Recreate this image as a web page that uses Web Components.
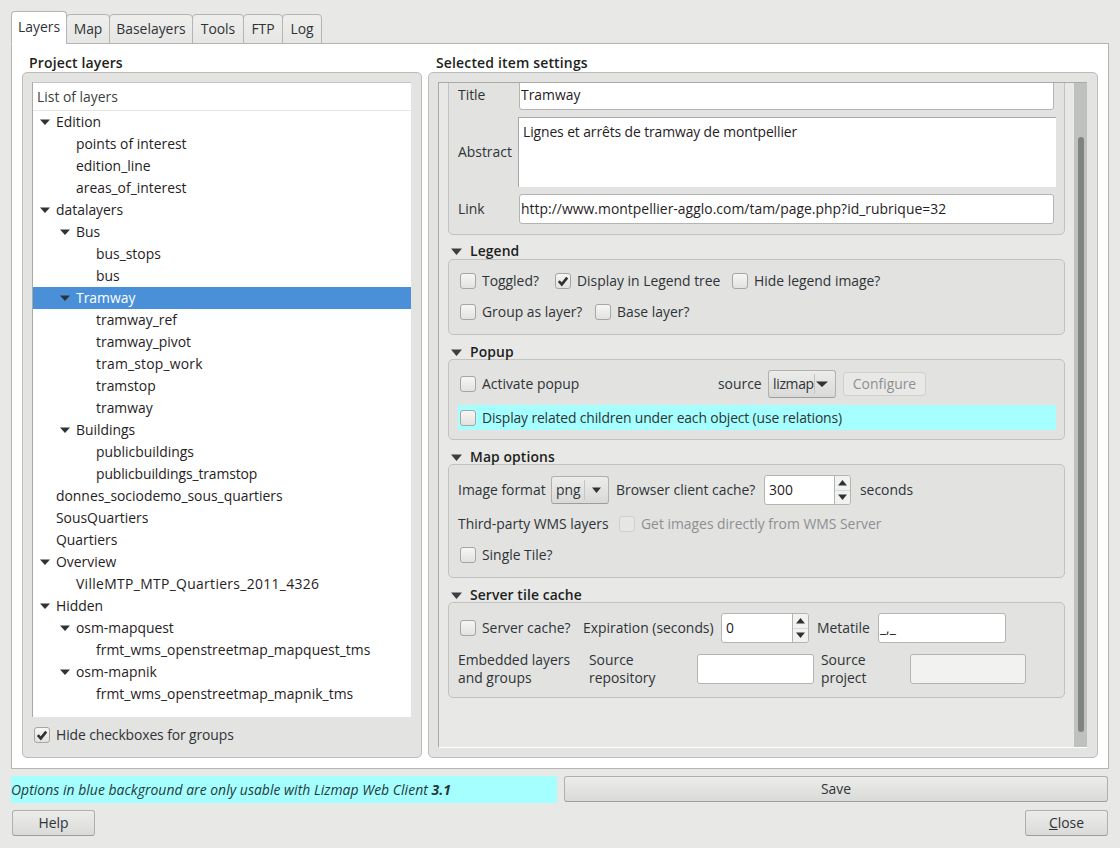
<!DOCTYPE html>
<html>
<head>
<meta charset="utf-8">
<style>
  html, body { margin: 0; background: #e8e8e7; }
  body { font: 13.9px/18px "Open Sans", "Noto Sans", sans-serif; color: #2e3436; width: 1120px; height: 848px; overflow: hidden; }
</style>
</head>
<body>
<lizmap-dialog>
  <tab-bar slot="tabs">
    <tab-button active style="width:56px">Layers</tab-button><tab-button style="width:44px">Map</tab-button><tab-button style="width:84px">Baselayers</tab-button><tab-button style="width:52px">Tools</tab-button><tab-button style="width:40px">FTP</tab-button><tab-button style="width:40px">Log</tab-button>
  </tab-bar>

  <titled-panel slot="left" heading="Project layers" style="width:400px">
    <layer-tree heading="List of layers">
      <tree-row level="0" open>Edition</tree-row>
      <tree-row level="1">points of interest</tree-row>
      <tree-row level="1">edition_line</tree-row>
      <tree-row level="1">areas_of_interest</tree-row>
      <tree-row level="0" open>datalayers</tree-row>
      <tree-row level="1" open>Bus</tree-row>
      <tree-row level="2">bus_stops</tree-row>
      <tree-row level="2">bus</tree-row>
      <tree-row level="1" open selected>Tramway</tree-row>
      <tree-row level="2">tramway_ref</tree-row>
      <tree-row level="2">tramway_pivot</tree-row>
      <tree-row level="2" style="letter-spacing:.2px">tram_stop_work</tree-row>
      <tree-row level="2">tramstop</tree-row>
      <tree-row level="2">tramway</tree-row>
      <tree-row level="1" open>Buildings</tree-row>
      <tree-row level="2">publicbuildings</tree-row>
      <tree-row level="2" style="letter-spacing:-.1px">publicbuildings_tramstop</tree-row>
      <tree-row level="0">donnes_sociodemo_sous_quartiers</tree-row>
      <tree-row level="0">SousQuartiers</tree-row>
      <tree-row level="0">Quartiers</tree-row>
      <tree-row level="0" open>Overview</tree-row>
      <tree-row level="1" style="letter-spacing:.33px">VilleMTP_MTP_Quartiers_2011_4326</tree-row>
      <tree-row level="0" open>Hidden</tree-row>
      <tree-row level="1" open>osm-mapquest</tree-row>
      <tree-row level="2" style="letter-spacing:.05px">frmt_wms_openstreetmap_mapquest_tms</tree-row>
      <tree-row level="1" open>osm-mapnik</tree-row>
      <tree-row level="2" style="letter-spacing:.05px">frmt_wms_openstreetmap_mapnik_tms</tree-row>
    </layer-tree>
    <form-row style="margin:10px 0 0 2px;height:16px"><check-box checked style="letter-spacing:-.1px">Hide checkboxes for groups</check-box></form-row>
  </titled-panel>

  <titled-panel slot="right" heading="Selected item settings" style="width:670px">
    <scroll-area>
      <setting-group style="margin-top:-13px;--pt:9px;--pb:10px">
        <form-row style="height:30px">
          <field-label style="width:61px">Title</field-label>
          <text-input style="width:535px">Tramway</text-input>
        </form-row>
        <form-row style="height:70px;margin-top:7px">
          <field-label style="width:60px">Abstract</field-label>
          <text-area style="width:538px;height:70px;letter-spacing:-.1px">Lignes et arrêts de tramway de montpellier</text-area>
        </form-row>
        <form-row style="height:30px;margin-top:7px">
          <field-label style="width:61px">Link</field-label>
          <text-input style="width:535px;letter-spacing:.03px">http://www.montpellier-agglo.com/tam/page.php?id_rubrique=32</text-input>
        </form-row>
      </setting-group>

      <setting-group heading="Legend" style="margin-top:8px;--pt:10px;--pb:11px">
        <form-row style="height:22px">
          <check-box style="margin-left:2px;width:95px">Toggled?</check-box>
          <check-box checked style="width:177px">Display in Legend tree</check-box>
          <check-box>Hide legend image?</check-box>
        </form-row>
        <form-row style="height:22px;margin-top:9px">
          <check-box style="margin-left:2px;width:135px">Group as layer?</check-box>
          <check-box>Base layer?</check-box>
        </form-row>
      </setting-group>

      <setting-group heading="Popup" style="margin-top:8px;--tp:2px;--pt:10px;--pb:9px">
        <form-row style="height:28px">
          <check-box style="margin-left:2px;width:258px">Activate popup</check-box>
          <field-label style="width:50px">source</field-label>
          <combo-box style="width:68px;letter-spacing:-.3px">lizmap</combo-box>
          <push-button disabled style="width:83px;height:24px;margin-left:7px">Configure</push-button>
        </form-row>
        <form-row style="height:25px;margin-top:7px;background:#a5ffff">
          <check-box style="margin-left:2px;letter-spacing:-.14px">Display related children under each object (use relations)</check-box>
        </form-row>
      </setting-group>

      <setting-group heading="Map options" style="margin-top:8px;--tp:2px;--pt:10px;--pb:11px">
        <form-row style="height:30px">
          <field-label style="width:93px">Image format</field-label>
          <combo-box style="width:58px" separated>png</combo-box>
          <field-label style="width:148px;margin-left:7px">Browser client cache?</field-label>
          <spin-box style="width:87px">300</spin-box>
          <field-label style="margin-left:9px">seconds</field-label>
        </form-row>
        <form-row style="height:22px;margin-top:8px">
          <field-label style="width:161px">Third-party WMS layers</field-label>
          <check-box disabled>Get images directly from WMS Server</check-box>
        </form-row>
        <form-row style="height:22px;margin-top:9px">
          <check-box style="margin-left:2px">Single Tile?</check-box>
        </form-row>
      </setting-group>

      <setting-group heading="Server tile cache" style="margin-top:8px;--tp:2px;--pt:10px;--pb:13px">
        <form-row style="height:30px">
          <check-box style="margin-left:2px;width:123px">Server cache?</check-box>
          <field-label style="width:138px">Expiration (seconds)</field-label>
          <spin-box style="width:88px">0</spin-box>
          <field-label style="width:61px;margin-left:8px">Metatile</field-label>
          <text-input style="width:128px">_,_</text-input>
        </form-row>
        <form-row style="height:30px;margin-top:11px">
          <field-label style="width:131px">Embedded layers<br>and groups</field-label>
          <field-label style="width:108px">Source<br>repository</field-label>
          <text-input style="width:117px"></text-input>
          <field-label style="width:89px;margin-left:7px">Source<br>project</field-label>
          <text-input disabled style="width:116px"></text-input>
        </form-row>
      </setting-group>
    </scroll-area>
  </titled-panel>

  <note-bar slot="note"><i>Options in blue background are only usable with Lizmap Web Client <b>3.1</b></i></note-bar>
  <push-button slot="save" style="width:544px;height:26px">Save</push-button>
  <push-button slot="help" style="width:83px;height:26px">Help</push-button>
  <push-button slot="close" style="width:83px;height:26px"><u>C</u>lose</push-button>
</lizmap-dialog>

<script>
  // one helper, every element sets its own shadow markup
  class Base extends HTMLElement {
    constructor() {
      super();
      this.attachShadow({ mode: "open" });
    }
    connectedCallback() {
      this.shadowRoot.innerHTML = this.markup();
    }
  }

  const arrowDown = (w, h, c) =>
    `<svg width="${w}" height="${h}" viewBox="0 0 10 6" preserveAspectRatio="none"><path d="M0 0.5h10L5 6z" fill="${c}"/></svg>`;
  const arrowUp = (w, h, c) =>
    `<svg width="${w}" height="${h}" viewBox="0 0 10 6" preserveAspectRatio="none"><path d="M0 5.5h10L5 0z" fill="${c}"/></svg>`;

  class LizmapDialog extends Base {
    markup() {
      return `<style>
        :host { display: block; padding: 11px 11px 0 11px; }
        .pane { box-sizing: border-box; width: 1098px; height: 726px; margin-top: -1px; background: #fff;
          border: 1px solid #b4b4b2; padding: 10px; display: flex; gap: 6px; }
        .foot { display: flex; align-items: flex-start; gap: 7px; margin-top: 7px; }
        .btns { display: flex; justify-content: space-between; margin: 7px 1px 0 1px; }
      </style>
      <slot name="tabs"></slot>
      <div class="pane"><slot name="left"></slot><slot name="right"></slot></div>
      <div class="foot"><slot name="note"></slot><slot name="save"></slot></div>
      <div class="btns"><slot name="help"></slot><slot name="close"></slot></div>`;
    }
  }

  class TabBar extends Base {
    markup() {
      return `<style>:host { display: flex; align-items: flex-end; height: 33px; position: relative; z-index: 1; }</style><slot></slot>`;
    }
  }

  class TabButton extends Base {
    markup() {
      const on = this.hasAttribute("active");
      return `<style>
        :host { display: flex; align-items: center; justify-content: center; box-sizing: border-box; margin-right: -1px;
          height: ${on ? 33 : 30}px; border: 1px solid #b4b4b2; border-radius: 4px 4px 0 0;
          background: ${on ? "#fff" : "linear-gradient(#eeeeed,#e6e6e5)"};
          ${on ? "border-bottom-color:#fff;padding-bottom:2px;" : ""} }
      </style><slot></slot>`;
    }
  }

  class TitledPanel extends Base {
    markup() {
      const left = this.getAttribute("heading") === "Project layers" ? 7 : 8;
      return `<style>
        :host { display: block; }
        h2 { margin: 0; height: 18px; padding-left: ${left}px; font: 600 14px/18px "Open Sans", sans-serif; letter-spacing: .15px; color: #1d1f20; }
        .box { box-sizing: border-box; height: 686px; padding: 9px 10px 0 9px; background: #e3e3e2;
          border: 1px solid #bcbcba; border-radius: 5px; }
      </style>
      <h2>${this.getAttribute("heading")}</h2>
      <div class="box"><slot></slot></div>`;
    }
  }

  class LayerTree extends Base {
    markup() {
      return `<style>
        :host { display: block; box-sizing: border-box; height: 635px; background: #fff;
          border-left: 1px solid #a9a9a7; border-top: 1px solid #c4c4c2; color: #1f2223; }
        .head { height: 27px; padding-left: 4px; display: flex; align-items: center; border-bottom: 1px solid #e6e6e5; color: #3a3f41; }
      </style>
      <div class="head">${this.getAttribute("heading")}</div>
      <slot></slot>`;
    }
  }

  class TreeRow extends Base {
    markup() {
      const level = Number(this.getAttribute("level"));
      const sel = this.hasAttribute("selected");
      const open = this.hasAttribute("open");
      return `<style>
        :host { display: flex; align-items: center; height: 22px; box-sizing: border-box;
          padding-left: ${7 + 20 * level}px; ${sel ? "background:#4a90d9;color:#fff;" : ""} }
        .a { width: 10px; margin-right: 6px; display: flex; }
      </style>
      <span class="a">${open ? arrowDown(10, 6, "#2e3436") : ""}</span><slot></slot>`;
    }
  }

  class ScrollArea extends Base {
    markup() {
      return `<style>
        :host { display: flex; box-sizing: border-box; height: 666px; width: 649px; background: #e8e8e7;
          border-left: 1px solid #a9a9a7; border-top: 1px solid #a9a9a7; border-bottom: 1px solid #fff; overflow: hidden; }
        .view { width: 635px; height: 100%; overflow: hidden; flex: none; }
        .bar { width: 13px; flex: none; box-sizing: border-box; padding: 54px 3px 15px 4px; background: #bfc1bf; }
        .thumb { height: 100%; border-radius: 3px; background: #7f8382; }
      </style>
      <div class="view"><slot></slot></div>
      <div class="bar"><div class="thumb"></div></div>`;
    }
  }

  class SettingGroup extends Base {
    markup() {
      const h = this.getAttribute("heading");
      return `<style>
        :host { display: block; width: 617px; margin-left: 9px; }
        .t { display: flex; align-items: center; box-sizing: border-box; height: 16px; padding: var(--tp, 0) 0 0 3px;
          font-weight: 600; letter-spacing: .1px; color: #1d1f20; }
        .t svg { margin-right: 8px; }
        .box { box-sizing: border-box; padding: var(--pt) 8px var(--pb) 9px; background: #e2e2e1;
          border: 1px solid #c2c2c0; border-radius: 5px; }
      </style>
      ${h ? `<div class="t">${arrowDown(11, 7, "#3a3f41")}${h}</div>` : ""}
      <div class="box"><slot></slot></div>`;
    }
  }

  class FormRow extends Base {
    markup() {
      return `<style>:host { display: flex; align-items: center; }</style><slot></slot>`;
    }
  }

  class FieldLabel extends Base {
    markup() {
      return `<style>:host { display: block; flex: none; white-space: nowrap; }</style><slot></slot>`;
    }
  }

  class CheckBox extends Base {
    markup() {
      const on = this.hasAttribute("checked");
      const off = this.hasAttribute("disabled");
      return `<style>
        :host { display: flex; align-items: center; flex: none; white-space: nowrap; ${off ? "color:#8d9091;" : ""} }
        .b { box-sizing: border-box; width: 16px; height: 16px; margin-right: 6px; border: 1px solid ${off ? "#cfcfcd" : "#a6a6a4"}; border-radius: 3px;
          background: ${off ? "#e6e6e5" : "linear-gradient(#f6f6f5,#e2e2e1)"}; display: flex; align-items: center; justify-content: center; }
      </style>
      <span class="b">${on ? '<svg width="12" height="12" viewBox="0 0 12 12"><path d="M1.8 6.2l3 3.2L10.2 2.6" fill="none" stroke="#2e3436" stroke-width="2.6"/></svg>' : ""}</span><slot></slot>`;
    }
  }

  class TextInput extends Base {
    markup() {
      const off = this.hasAttribute("disabled");
      return `<style>
        :host { display: flex; align-items: center; flex: none; box-sizing: border-box; height: 30px; padding: 0 1px;
          background: ${off ? "#f2f2f1" : "#fff"}; border: 1px solid #b4b4b2; border-radius: 3px; white-space: nowrap; color: #1f2223; }
      </style><slot></slot>`;
    }
  }

  class TextArea extends Base {
    markup() {
      return `<style>
        :host { display: block; flex: none; box-sizing: border-box; padding: 5px 4px; background: #fff;
          border-left: 1px solid #a9a9a7; border-top: 1px solid #a9a9a7; color: #1f2223; }
      </style><slot></slot>`;
    }
  }

  class SpinBox extends Base {
    markup() {
      return `<style>
        :host { display: flex; flex: none; height: 30px; box-sizing: border-box; background: #fff; border: 1px solid #b4b4b2; border-radius: 3px; color: #1f2223; }
        .v { flex: 1; display: flex; align-items: center; padding-left: 4px; border-right: 1px solid #b4b4b2; }
        .s { width: 15px; display: flex; flex-direction: column; background: #f2f2f1; border-radius: 0 3px 3px 0; }
        .s span { flex: 1; display: flex; align-items: center; justify-content: center; }
        .s span + span { border-top: 1px solid #d8d8d6; }
      </style>
      <div class="v"><slot></slot></div>
      <div class="s"><span>${arrowUp(9, 6, "#2e3436")}</span><span>${arrowDown(9, 6, "#2e3436")}</span></div>`;
    }
  }

  class ComboBox extends Base {
    markup() {
      const sep = this.hasAttribute("separated");
      return `<style>
        :host { display: flex; align-items: center; flex: none; height: 28px; box-sizing: border-box; padding-left: 4px;
          background: linear-gradient(#ececeb,#d9d9d8); border: 1px solid #b0b0ae; border-bottom-color: #9d9d9b; border-radius: 3px; }
        .sep { margin-left: ${sep ? "auto" : "0"}; height: 20px; border-left: 1px solid #c4c4c2; }
        .a { display: flex; justify-content: center; width: ${sep ? 23 : 15}px; }
      </style>
      <slot></slot><span class="sep"></span><span class="a">${arrowDown(sep ? 9 : 12, 6, "#2e3436")}</span>`;
    }
  }

  class PushButton extends Base {
    markup() {
      const off = this.hasAttribute("disabled");
      return `<style>
        :host { display: flex; align-items: center; justify-content: center; flex: none; box-sizing: border-box;
          background: ${off ? "#e8e8e7" : "linear-gradient(#ececeb,#dadad9)"}; border: 1px solid ${off ? "#cfcfcd" : "#b0b0ae"};
          ${off ? "color:#8d9091;" : "border-bottom-color:#9d9d9b;"} border-radius: 3px; }
      </style><slot></slot>`;
    }
  }

  class NoteBar extends Base {
    markup() {
      return `<style>:host { display: flex; align-items: center; box-sizing: border-box; width: 546px; height: 27px; background: #a5ffff; color: #25393b; white-space: nowrap; letter-spacing: .05px; }</style><slot></slot>`;
    }
  }

  customElements.define("lizmap-dialog", LizmapDialog);
  customElements.define("tab-bar", TabBar);
  customElements.define("tab-button", TabButton);
  customElements.define("titled-panel", TitledPanel);
  customElements.define("layer-tree", LayerTree);
  customElements.define("tree-row", TreeRow);
  customElements.define("scroll-area", ScrollArea);
  customElements.define("setting-group", SettingGroup);
  customElements.define("form-row", FormRow);
  customElements.define("field-label", FieldLabel);
  customElements.define("check-box", CheckBox);
  customElements.define("text-input", TextInput);
  customElements.define("text-area", TextArea);
  customElements.define("spin-box", SpinBox);
  customElements.define("combo-box", ComboBox);
  customElements.define("push-button", PushButton);
  customElements.define("note-bar", NoteBar);
</script>
</body>
</html>
